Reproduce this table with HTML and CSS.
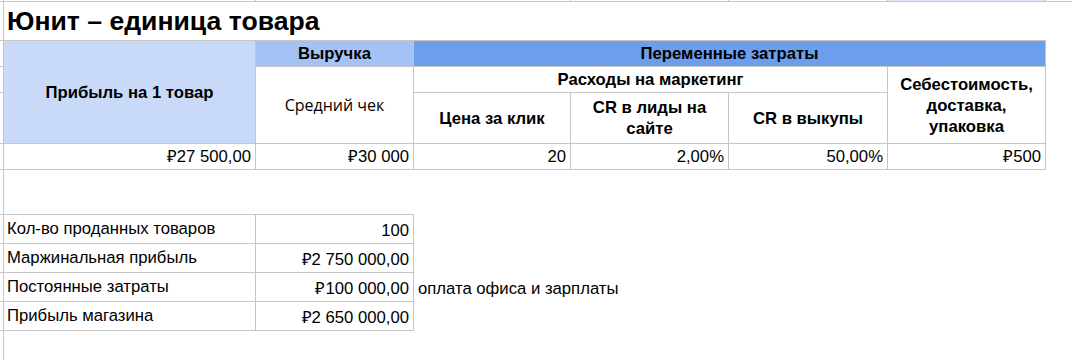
FILE: index.html
```html
<!DOCTYPE html>
<html lang="ru">
<head>
<meta charset="utf-8">
<link rel="stylesheet" href="styles.css">
</head>
<body>
<div class="sheet">
  <!-- top strip -->
  <div class="c strip r1 g0"></div>
  <div class="c strip r1 c1 bl br"></div>
  <div class="c strip r1 c2"></div>
  <div class="c strip r1 c3 br"></div>
  <div class="c strip r1 c4 br"></div>
  <div class="c strip r1 c5 br"></div>
  <div class="c strip r1 c6 br sel"></div>
  <div class="c strip r1 c7"></div>

  <!-- title -->
  <div class="c r2 g0 bb"></div>
  <div class="c r2 title-cell bl bb"><span class="title">Юнит – единица товара</span></div>

  <!-- gutter ticks -->
  <div class="c r3 g0 bb"></div>
  <div class="c r4 g0 bb"></div>
  <div class="c r5 g0 bb"></div>
  <div class="c r6 g0 bb"></div>
  <div class="c r7 g0 bb"></div>
  <div class="c r8 g0 bb"></div>
  <div class="c r9 g0 bb"></div>
  <div class="c r10 g0 bb"></div>
  <div class="c r11 g0 bb"></div>

  <!-- header -->
  <div class="c head-profit c1 bl br bb hdr blue3">Прибыль на 1 товар</div>
  <div class="c r3 c2 br bb hdr blue2">Выручка</div>
  <div class="c head-avg c2 br bb mid alt">Средний чек</div>
  <div class="c r3 head-var br bb hdr blue1">Переменные затраты</div>
  <div class="c r4 head-mkt br bb hdr">Расходы на маркетинг</div>
  <div class="c head-cost c6 br bb hdr">Себестоимость, доставка, упаковка</div>
  <div class="c r5 c3 br bb hdr">Цена за клик</div>
  <div class="c r5 c4 br bb hdr">CR в лиды на сайте</div>
  <div class="c r5 c5 br bb hdr">CR в выкупы</div>

  <!-- data row -->
  <div class="c r6 c1 bl br bb num">₽27 500,00</div>
  <div class="c r6 c2 br bb num">₽30 000</div>
  <div class="c r6 c3 br bb num">20</div>
  <div class="c r6 c4 br bb num">2,00%</div>
  <div class="c r6 c5 br bb num">50,00%</div>
  <div class="c r6 c6 br bb num">₽500</div>

  <!-- spacer -->
  <div class="c r7 c1 bl bb"></div>
  <div class="c r7 c2 bb"></div>

  <!-- summary table -->
  <div class="c r8 c1 bl br bb lbl">Кол-во проданных товаров</div>
  <div class="c r8 c2 br bb num">100</div>
  <div class="c r9 c1 bl br bb lbl">Маржинальная прибыль</div>
  <div class="c r9 c2 br bb num">₽2 750 000,00</div>
  <div class="c r10 c1 bl br bb lbl">Постоянные затраты</div>
  <div class="c r10 c2 br bb num">₽100 000,00</div>
  <div class="c r10 note">оплата офиса и зарплаты</div>
  <div class="c r11 c1 bl br bb lbl">Прибыль магазина</div>
  <div class="c r11 c2 br bb num">₽2 650 000,00</div>

  <div class="c r12 c1 bl"></div>
</div>
</body>
</html>
```

FILE: styles.css
```css
html, body {
  margin: 0;
  padding: 0;
  background: #ffffff;
}

body {
  width: 1072px;
  height: 360px;
  overflow: hidden;
  font-family: "Liberation Sans", Arial, sans-serif;
  font-size: 16.7px;
  color: #000000;
}

.sheet {
  display: grid;
  grid-template-columns: 3px 253px 158px 157px 158px 159px 158px 1fr;
  grid-template-rows: 2px 39px 26px 26px 51px 26px 45px 29px 29px 29px 29px 1fr;
  height: 360px;
}

.c {
  box-sizing: border-box;
  min-width: 0;
  overflow: visible;
  white-space: nowrap;
}

/* grid placement */
.g0 { grid-column: 1; }
.c1 { grid-column: 2; }
.c2 { grid-column: 3; }
.c3 { grid-column: 4; }
.c4 { grid-column: 5; }
.c5 { grid-column: 6; }
.c6 { grid-column: 7; }
.c7 { grid-column: 8; }

.r1 { grid-row: 1; }
.r2 { grid-row: 2; }
.r3 { grid-row: 3; }
.r4 { grid-row: 4; }
.r5 { grid-row: 5; }
.r6 { grid-row: 6; }
.r7 { grid-row: 7; }
.r8 { grid-row: 8; }
.r9 { grid-row: 9; }
.r10 { grid-row: 10; }
.r11 { grid-row: 11; }
.r12 { grid-row: 12; }

.title-cell { grid-column: 2 / 8; }
.head-profit { grid-row: 3 / 6; }
.head-avg { grid-row: 4 / 6; }
.head-var { grid-column: 4 / 8; }
.head-mkt { grid-column: 4 / 7; }
.head-cost { grid-row: 4 / 6; }
.note { grid-column: 4 / 7; }

/* borders */
.bl { border-left: 1px solid #c6c6c6; }
.br { border-right: 1px solid #c6c6c6; }
.bb { border-bottom: 1px solid #c6c6c6; }

.strip { border-bottom: 1px solid #c6c6c6; }
.strip.sel { background: #dce6f8; }

/* fills */
.blue3 { background: #c9daf8; }
.blue2 { background: #a4c2f4; }
.blue1 { background: #6d9eeb; }

/* text */
.title-cell {
  display: flex;
  align-items: flex-end;
  padding: 0 0 3px 3px;
}
.title {
  font-weight: 700;
  font-size: 26.6px;
  line-height: 32px;
}

.hdr {
  display: flex;
  align-items: center;
  justify-content: center;
  text-align: center;
  font-weight: 700;
  font-size: 16.7px;
  line-height: 21px;
  white-space: normal;
  padding: 0 6px;
}

.mid {
  display: flex;
  align-items: center;
  justify-content: center;
}

.alt {
  font-family: "Open Sans", "Noto Sans", sans-serif;
  font-size: 16px;
}

.num {
  display: flex;
  align-items: flex-end;
  justify-content: flex-end;
  padding: 0 4px 3px 0;
  line-height: 19px;
}

.lbl {
  display: flex;
  align-items: center;
  padding: 0 0 1px 3px;
  line-height: 19px;
}

.note {
  display: flex;
  align-items: flex-end;
  padding: 0 0 4px 4px;
  line-height: 19px;
}
```
